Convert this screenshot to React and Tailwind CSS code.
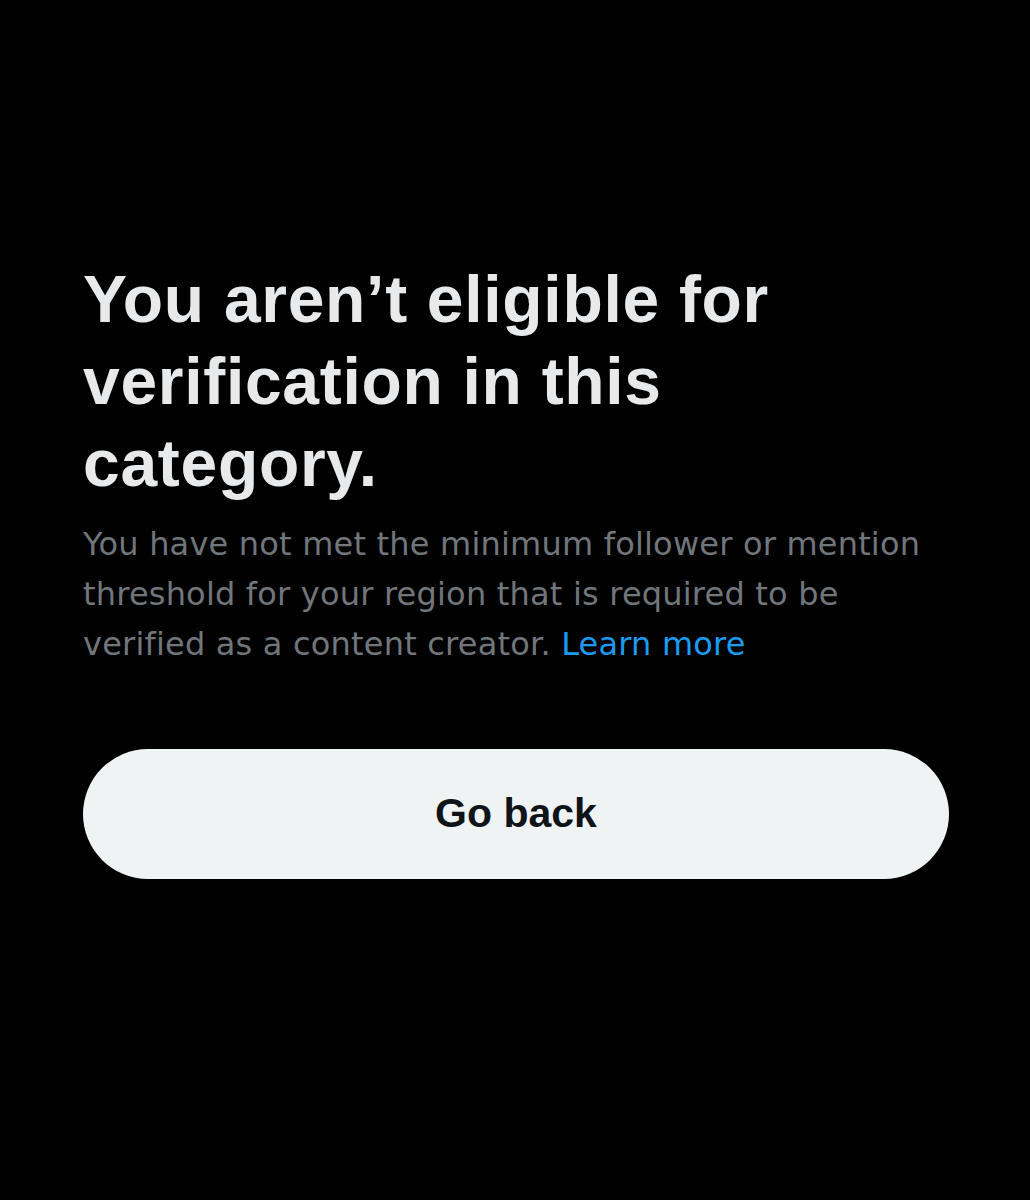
export default function App() {
  return (
    <div className="min-h-[1200px] w-full bg-black" style={{ fontFamily: '"Liberation Sans", Arial, sans-serif' }}>
      <div className="pl-[83px] pr-[81px] pt-[258px]">
        <h1 className="pr-[100px] text-[66px] font-bold leading-[82px] tracking-[0.7px] text-[#e7e9ea]">
          You aren’t eligible for verification in this category.
        </h1>
        <p className="mt-[15px] font-['DejaVu_Sans',sans-serif] text-[32px] leading-[50px] tracking-[0.2px] text-[#71767b]">
          You have not met the minimum follower or mention threshold for your region that is required to be verified as a content creator.{' '}
          <a className="text-[#1d9bf0]">Learn more</a>
        </p>
        <button className="mt-[80px] flex h-[130px] w-full items-center justify-center rounded-full bg-[#eff3f4] text-[41px] font-bold text-[#0f1419]">
          Go back
        </button>
      </div>
    </div>
  );
}
